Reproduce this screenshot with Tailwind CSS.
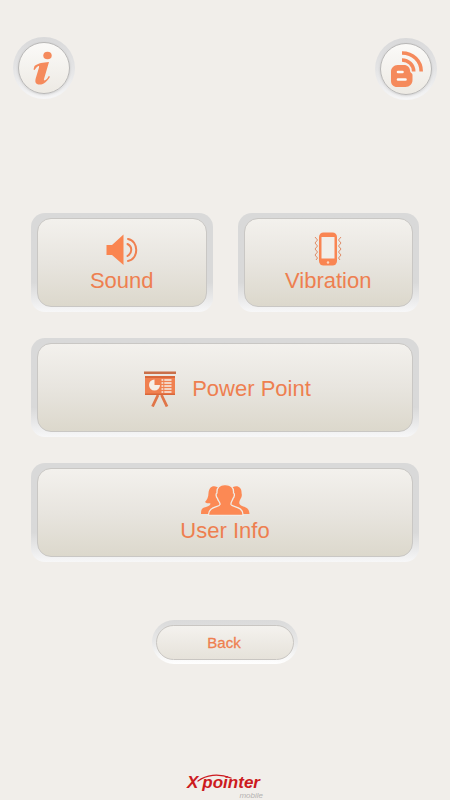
<!DOCTYPE html>
<html lang="en">
<head>
  <meta charset="UTF-8" />
  <meta name="viewport" content="width=device-width, initial-scale=1" />
  <title>Settings | Xpointer mobile</title>
  <script src="https://cdn.jsdelivr.net/npm/@tailwindcss/browser@4"></script>
</head>
<body class="min-h-screen flex flex-col bg-[#f1eeea] font-['Liberation_Sans',Arial,sans-serif] text-[#ee7f50]">
  <!-- Header -->
  <header class="flex justify-between px-[13px] pt-[37px]">
    <a href="#info" aria-label="Information" class="size-[62px] p-[5px] rounded-full bg-linear-to-b from-[#d9d9da] via-[#e4e4e5] to-[#f6f6f7]">
      <span class="flex items-center justify-center size-full rounded-full border border-[#b9b8b7] bg-linear-to-b from-[#fbfaf8] to-[#edeae4] shadow-sm">
        <svg class="w-6 h-10" viewBox="0 0 24 40" fill="#f58a5c">
          <ellipse cx="15.5" cy="7.5" rx="4.200" ry="3.800" />
          <path d="M2.500 18C6.500 15 11 14.500 17 14L12 31C11.700 32.500 12.500 32.800 13.500 32C15 31 16 29.500 16.800 28L18 28.700C15.500 33 12 36.500 7.500 36.500C3.500 36.500 2.800 34 3.700 30.500L7 19.500C7.300 18 6.800 17.800 6 18.200C4.500 19 3.500 20.500 2.700 22L1.500 21.500Z" />
        </svg>
      </span>
    </a>
    <a href="#blog" aria-label="Blog" class="size-[62px] mt-px p-[5px] rounded-full bg-linear-to-b from-[#d9d9da] via-[#e4e4e5] to-[#f6f6f7]">
      <span class="flex items-center justify-center size-full rounded-full border border-[#b9b8b7] bg-linear-to-b from-[#fbfaf8] to-[#edeae4] shadow-sm">
        <svg class="size-9" viewBox="0 0 36 36">
          <path fill="#f58a5c" d="M9.500 14H16C19.500 14 22 16.500 22 19.500C22 22 24.500 22 24.500 24V29C24.500 33 21.500 36 17.500 36H9C5.500 36 3 33.500 3 30V20.500C3 17 6 14 9.500 14Z" />
          <path fill="none" stroke="#fbfaf8" stroke-width="2.600" stroke-linecap="round" d="M10 21H14.500M10 28.500H17.500" />
          <g fill="none" stroke="#f58a5c" stroke-width="3.600">
            <path d="M14 9C20.500 9 25.700 14 25.700 20.500" />
            <path d="M14 2C25 2 33.200 10 33.200 20.500" />
          </g>
        </svg>
      </span>
    </a>
  </header>

  <!-- Menu -->
  <main class="grid grid-cols-2 gap-x-[25px] gap-y-[26px] px-[31px] pt-[113px] text-[22px] leading-7">
    <div class="px-[6px] py-[5px] rounded-[14px] bg-linear-to-b from-[#d9d9d9] from-70% to-[#f7f7f8]">
      <button class="flex flex-col items-center w-full h-[89px] pt-[15px] rounded-[14px] border border-[#c9c7c4] bg-linear-to-b from-[#f3f1ed] via-[#e8e5df] to-[#dcd8cc]">
        <svg class="w-8 h-8 shrink-0" viewBox="0 0 32 32">
          <path fill="#fa8550" d="M0.500 11H6L17.500 0.500V31L6 21H0.500Z" />
          <path fill="none" stroke="#f08050" stroke-width="2" stroke-linecap="round" d="M21.500 10C26.500 12.500 26.500 19 21.500 22M22 5C33 7 33 25 22 27" />
        </svg>
        <span class="mt-px">Sound</span>
      </button>
    </div>
    <div class="px-[6px] py-[5px] rounded-[14px] bg-linear-to-b from-[#d9d9d9] from-70% to-[#f7f7f8]">
      <button class="flex flex-col items-center w-full h-[89px] pt-[13px] rounded-[14px] border border-[#c9c7c4] bg-linear-to-b from-[#f3f1ed] via-[#e8e5df] to-[#dcd8cc]">
        <svg class="w-7 h-[34px] shrink-0" viewBox="0 0 28 34">
          <rect x="5" y="0.500" width="18" height="33" rx="4.500" fill="#f98552" />
          <rect x="7.500" y="5" width="13" height="21.500" fill="#f1eee9" />
          <circle cx="14" cy="30.500" r="1.200" fill="#fbd6c2" />
          <path fill="none" stroke="#df8d69" stroke-width="1" d="M1 5L3.500 8L1 11L3.500 14L1 17L3.500 20L1 23L3.500 26L2 28M27 5L24.500 8L27 11L24.500 14L27 17L24.500 20L27 23L24.500 26L26 28" />
        </svg>
        <span class="mt-px">Vibration</span>
      </button>
    </div>
    <div class="col-span-2 px-[6px] py-[5px] rounded-[14px] bg-linear-to-b from-[#d9d9d9] from-70% to-[#f7f7f8]">
      <button class="flex items-center justify-center gap-[15px] w-full h-[89px] pl-1 pt-[2px] rounded-[14px] border border-[#c9c7c4] bg-linear-to-b from-[#f3f1ed] via-[#e8e5df] to-[#dcd8cc]">
        <svg class="w-[34px] h-9" viewBox="0 0 34 36">
          <path fill="#c96f49" d="M1 0.500H33V3H1Z" />
          <path fill="#f08050" d="M2 5H32V24H2Z" />
          <path fill="#d9673a" d="M2 5H32V7H2ZM2 22.500H32V24H2Z" />
          <path fill="#f5eee7" d="M11.500 8.500V14H17A5.500 5.500 0 1 1 11.500 8.500Z" />
          <path stroke="#f5eee7" stroke-width="1.500" d="M18.500 9H28.500M18.500 12H28.500M18.500 15H28.500M18.500 18H28.500M18.500 21H28.500" />
          <path stroke="#f08050" stroke-width="1" d="M20.800 8V22" />
          <path stroke="#e07548" stroke-width="2.800" d="M15 24L9.500 35.500M18.500 24L24 35.500" />
        </svg>
        <span>Power Point</span>
      </button>
    </div>
    <div class="col-span-2 px-[6px] py-[5px] rounded-[14px] bg-linear-to-b from-[#d9d9d9] from-70% to-[#f7f7f8]">
      <button class="flex flex-col items-center w-full h-[89px] pt-[15px] rounded-[14px] border border-[#c9c7c4] bg-linear-to-b from-[#f3f1ed] via-[#e8e5df] to-[#dcd8cc]">
        <svg class="w-[50px] h-8 shrink-0" viewBox="0 0 50 32" fill="#fc8954">
          <path d="M17 3C12 1 9 4 8.500 9C8.500 13 7 16 5 18C7 20 9 19 10.500 19.500C10.500 21 9 22 6 23C2 24 1 25 1 30H20V3Z" />
          <path d="M33 3C38 0.500 42 4 41.500 9C42.500 12 41 14 40.500 15C39 18 38.500 20 41 21.500C45 23.500 49 23 49.500 30H30V3Z" />
          <path stroke="#f0ece6" stroke-width="1.300" d="M25 0.700C31 0.500 34 3.500 33.500 9C35 9.500 34.500 13 33 14.500C32.300 17 30.500 18.500 31 20.500C32 23.500 43.500 22 43 31.300H8.500C8 22 19.500 23.500 20 20.500C20.500 18.500 18 17 17.500 14.500C16 13 15.500 9.500 17 9C16.500 3.500 19.500 0.500 25 0.700Z" />
        </svg>
        <span class="mt-px">User Info</span>
      </button>
    </div>
  </main>

  <!-- Back -->
  <div class="self-center mt-[58px] px-1 pt-[5px] pb-1 rounded-full bg-linear-to-b from-[#dadada] via-[#e8e8e8] to-white">
    <button class="block w-[138px] h-[35px] pr-[2px] rounded-full border border-[#c9c6c2] bg-linear-to-b from-[#f4f2ee] to-[#e6e2da] text-[15px] leading-8 [-webkit-text-stroke:0.3px_#ee7f50]">Back</button>
  </div>

  <!-- Logo -->
  <footer class="mt-auto flex justify-center">
    <div class="relative flex flex-col w-[76px] italic">
      <p class="flex items-baseline font-bold text-[#cc1a20]">
        <span class="text-[17px] leading-4 pr-1">X</span><span class="text-[17px] leading-4">pointer</span>
      </p>
      <svg class="absolute left-2 -top-[2px] w-10 h-3" viewBox="0 0 40 12">
        <path fill="none" stroke="#cc1a20" stroke-width="1.300" stroke-linecap="round" d="M3 8C11 2 23 0 36 5" />
      </svg>
      <span class="self-end pt-px text-[8px] leading-2 text-[#b5b3b1]">mobile</span>
    </div>
  </footer>
</body>
</html>
